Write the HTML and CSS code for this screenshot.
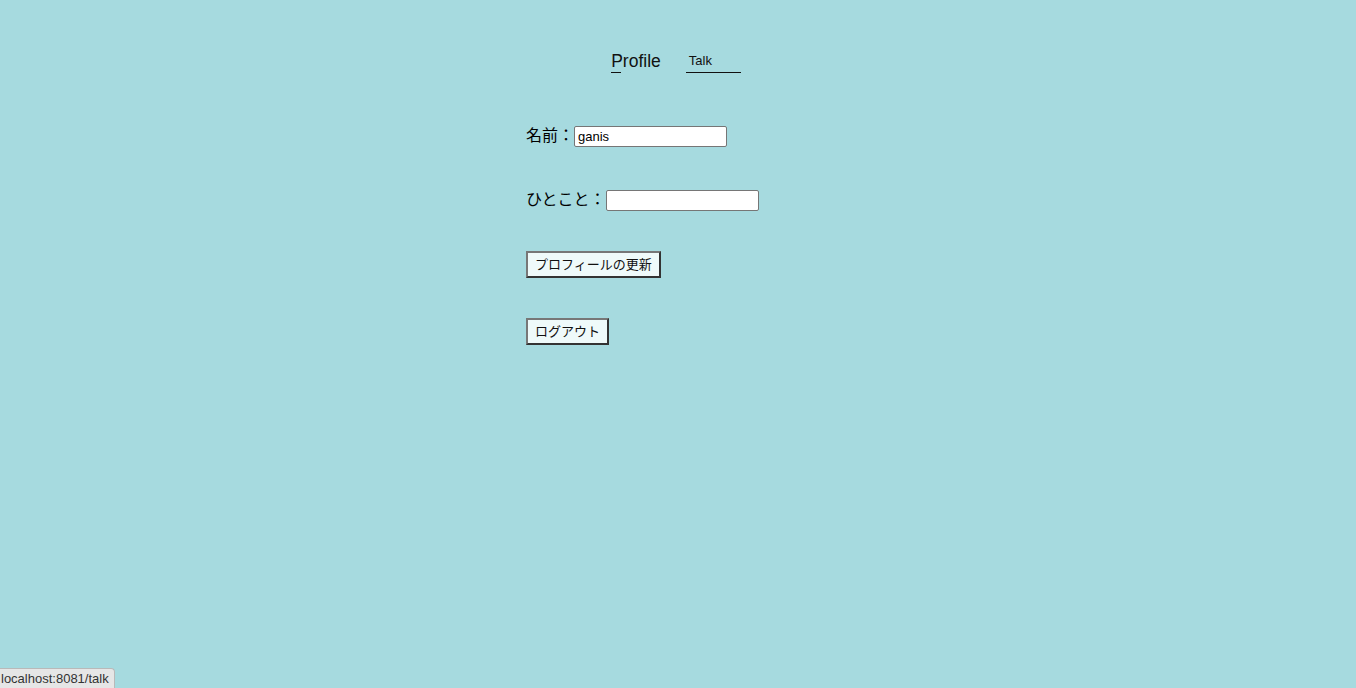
FILE: index.html
```html
<!DOCTYPE html>
<html lang="ja">
<head>
<meta charset="utf-8">
<title>Profile</title>
<link rel="stylesheet" href="styles.css">
</head>
<body>
<div class="page">
  <nav class="tabs">
    <a class="tab tab-active" href="#">Profile<span class="tab-indicator"></span></a>
    <a class="tab tab-talk" href="#">Talk</a>
  </nav>
  <form class="profile-form">
    <div class="field field-name">
      <label class="field-label">名前：</label><input class="field-input" type="text" value="ganis">
    </div>
    <div class="field field-comment">
      <label class="field-label">ひとこと：</label><input class="field-input" type="text" value="">
    </div>
    <div class="action action-update">
      <button class="btn" type="button">プロフィールの更新</button>
    </div>
    <div class="action action-logout">
      <button class="btn" type="button">ログアウト</button>
    </div>
  </form>
</div>
<div class="status-bar">localhost:8081/talk</div>
</body>
</html>
```

FILE: styles.css
```css
html, body {
  margin: 0;
  padding: 0;
  height: 100%;
  background: #a6dadf;
  font-family: "Liberation Sans", "Noto Sans CJK JP", sans-serif;
  color: #000;
}

.page {
  width: 304px;
  margin: 0 auto;
  padding-top: 50px;
}

.tabs {
  display: flex;
  justify-content: center;
  align-items: flex-end;
  gap: 25px;
  padding-right: 4px;
}

.tab {
  position: relative;
  color: #111;
  text-decoration: none;
  display: block;
  height: 23px;
  box-sizing: border-box;
}

.tab-active {
  font-size: 17.5px;
  line-height: 22px;
}

.tab-indicator {
  position: absolute;
  left: 0;
  bottom: 0;
  width: 10px;
  height: 1px;
  background: #111;
}

.tab-talk {
  font-size: 13px;
  line-height: 22px;
  width: 55px;
  padding-left: 3px;
  border-bottom: 1.5px solid #111;
  height: 23px;
}

.profile-form {
  margin-top: 53px;
}

.field {
  display: flex;
  align-items: center;
  height: 21px;
}

.field-comment {
  margin-top: 43px;
}

.field-label {
  font-family: "Noto Sans CJK JP", "Liberation Sans", sans-serif;
  font-size: 16px;
  line-height: 21px;
  position: relative;
  top: -2px;
}

.field-input {
  box-sizing: border-box;
  width: 153px;
  height: 21px;
  margin: 0;
  padding: 1px 3px;
  border: 1px solid #767676;
  border-radius: 2px;
  background: #fff;
  font-family: "Liberation Sans", sans-serif;
  font-size: 13px;
  color: #000;
}

.action-update {
  margin-top: 40px;
}

.action-logout {
  margin-top: 40px;
}

.btn {
  box-sizing: border-box;
  height: 27px;
  margin: 0;
  padding: 0 7px 2px;
  font-family: "Noto Sans CJK JP", "Liberation Sans", sans-serif;
  font-size: 13px;
  line-height: 1;
  color: #111;
  background: #effafa;
  border: 2px solid;
  border-color: #777 #333 #333 #777;
  border-radius: 0;
}

.status-bar {
  position: fixed;
  left: 0;
  bottom: 0;
  height: 20px;
  box-sizing: border-box;
  padding: 0 5px 0 1px;
  background: #e6e6e6;
  border: 1px solid #b9b9b9;
  border-left: none;
  border-bottom: none;
  border-top-right-radius: 4px;
  font-family: "Liberation Sans", sans-serif;
  font-size: 13px;
  line-height: 19px;
  color: #333;
}
```
